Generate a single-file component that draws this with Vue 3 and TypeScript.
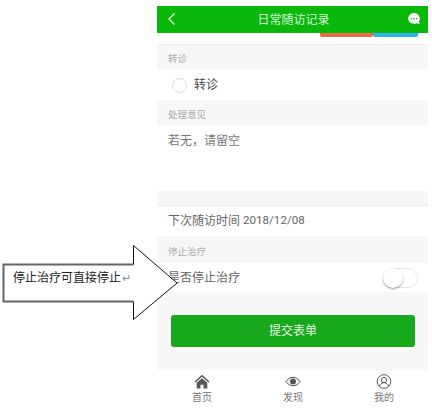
<script setup lang="ts">
const tabs = [
    { key: 'home', label: '首页' },
    { key: 'find', label: '发现' },
    { key: 'mine', label: '我的' },
]
</script>

<template>
    <div class="page">
        <div class="phone">
            <header class="nav">
                <svg class="nav-back" width="10" height="14" viewBox="0 0 10 14">
                    <path d="M7.500 1.500 2 7l5.500 5.500" fill="none" stroke="#d9f5d9" stroke-width="1.4" />
                </svg>
                <span class="nav-title">日常随访记录</span>
                <svg class="nav-msg" width="14" height="14" viewBox="0 0 14 14">
                    <path d="M7 1c3.300 0 5.800 2.400 5.800 5.600 0 1.100-.3 2.100-.8 2.900l.6 2.600-2.800-.9c-.8.4-1.800.6-2.800.6-3.300 0-5.800-2.200-5.800-5.200S3.700 1 7 1z" fill="#fff" />
                    <circle cx="4.500" cy="6.800" r=".8" fill="#1aa81a" />
                    <circle cx="7" cy="6.800" r=".8" fill="#1aa81a" />
                    <circle cx="9.500" cy="6.800" r=".8" fill="#1aa81a" />
                </svg>
            </header>
            <div class="strip">
                <span class="strip-red"></span>
                <span class="strip-blue"></span>
            </div>

            <div class="section s-first">转诊</div>
            <div class="row r-radio">
                <span class="radio"></span>
                <span class="radio-label">转诊</span>
            </div>
            <div class="section s-opinion">处理意见</div>
            <div class="opinion">若无，请留空</div>
            <div class="gap"></div>
            <div class="row r-date">
                <span class="row-text">下次随访时间</span>
                <span class="date">2018/12/08</span>
            </div>
            <div class="section s-stop">停止治疗</div>
            <div class="row r-switch">
                <span class="row-text">是否停止治疗</span>
                <span class="switch"><span class="knob"></span></span>
            </div>
            <div class="submit-wrap">
                <button class="submit">提交表单</button>
            </div>

            <nav class="tabs">
                <div v-for="tab in tabs" :key="tab.key" class="tab">
                    <svg v-if="tab.key === 'home'" width="16" height="15" viewBox="0 0 16 15">
                        <path d="M8 .8 .5 7.500l.9 1L8 2.700l6.600 5.800.9-1z" fill="#555" />
                        <path d="M2.700 8.800 8 4.200l5.300 4.600V14.500H9.500v-3.800h-3v3.800H2.700z" fill="#555" />
                    </svg>
                    <svg v-else-if="tab.key === 'find'" width="16" height="15" viewBox="0 0 16 15">
                        <path d="M1 7.500C2.800 4.700 5.200 3.300 8 3.300s5.200 1.400 7 4.200c-1.800 2.800-4.200 4.200-7 4.200S2.800 10.300 1 7.500z" fill="none" stroke="#555" stroke-width="1" />
                        <circle cx="8" cy="7.500" r="3" fill="#555" />
                    </svg>
                    <svg v-else width="16" height="15" viewBox="0 0 16 15">
                        <circle cx="8" cy="7.500" r="6.800" fill="none" stroke="#555" stroke-width="1" />
                        <circle cx="8" cy="6" r="2.600" fill="none" stroke="#555" stroke-width="1" />
                        <path d="M3.500 12.200c.6-2.200 2.300-3.500 4.500-3.500s3.900 1.300 4.500 3.500" fill="none" stroke="#555" stroke-width="1" />
                    </svg>
                    <span class="tab-label">{{ tab.label }}</span>
                </div>
            </nav>
        </div>

        <!-- callout sits over the phone -->
        <div class="callout">
            <svg class="callout-shape" width="180" height="76" viewBox="0 0 180 76">
                <path d="M133.500 19.500V.5L177 38 133.500 74.500V56.500H3.500V19.500z" fill="#fff" />
                <path d="M133.500 19.500V.5L177 38 133.500 74.500V56.500" fill="none" stroke="#111" stroke-width="1" />
                <path d="M133.500 19.500H3.500V56.500H133.500" fill="none" stroke="#666" stroke-width="2" />
            </svg>
            <span class="callout-text">停止治疗可直接停止<span class="callout-mark">↵</span></span>
        </div>
    </div>
</template>

<style scoped>
.page {
    position: relative;
    width: 432px;
    height: 418px;
    padding: 6px 0 0 157px;
    box-sizing: border-box;
    background: #fff;
    font-family: "Noto Sans CJK SC", "Noto Sans", sans-serif;
    overflow: hidden;
}
.phone {
    width: 271px;
    display: flex;
    flex-direction: column;
    background: #fff;
}
.nav {
    height: 27px;
    background: #09b80a;
    display: flex;
    align-items: center;
    justify-content: space-between;
    padding: 0 7px 0 10px;
    box-sizing: border-box;
}
.nav-back,
.nav-msg {
    margin-bottom: 2px;
}
.nav-title {
    color: #d9f5d9;
    font-size: 12px;
    margin: 0 0 3px 3px;
}
.strip {
    height: 11px;
    display: flex;
    padding-left: 163px;
    box-sizing: border-box;
}
.strip-red,
.strip-blue {
    height: 4px;
    border-radius: 0 0 2px 2px;
}
.strip-red {
    width: 53px;
    background: #ee6a45;
}
.strip-blue {
    width: 45px;
    background: #2db4ea;
}
.section {
    background: #f7f7f7;
    color: #aaa;
    font-size: 9.500px;
    padding-left: 11px;
    display: flex;
    align-items: center;
}
.s-first {
    height: 26px;
    border-top: 1px solid #efefef;
    box-sizing: border-box;
}
.s-opinion {
    height: 26px;
    box-sizing: border-box;
    padding-top: 2px;
}
.s-stop {
    height: 27px;
    box-sizing: border-box;
    padding-top: 3px;
}
.row {
    display: flex;
    align-items: center;
    padding-left: 11px;
    color: #666;
    font-size: 12px;
    background: #fff;
}
.row-text,
.date,
.radio-label {
    margin-bottom: 3px;
}
.r-radio {
    height: 30px;
    padding-left: 15px;
    color: #444;
}
.radio {
    width: 13px;
    height: 13px;
    border: 1px solid #ddd;
    border-radius: 50%;
    margin-right: 7px;
}
.opinion {
    height: 65px;
    padding: 5px 0 0 11px;
    box-sizing: border-box;
    color: #777;
    font-size: 12px;
}
.gap {
    height: 15px;
    background: #f7f7f7;
    border-bottom: 1px solid #eee;
    box-sizing: border-box;
}
.r-date {
    height: 30px;
}
.date {
    margin-left: 3px;
    font-family: Roboto, "Liberation Sans", sans-serif;
    font-size: 11.600px;
}
.r-switch {
    height: 29px;
    justify-content: space-between;
    padding-right: 10px;
}
.switch {
    position: relative;
    width: 35px;
    height: 20px;
    border: 1px solid #e4e4e4;
    border-radius: 11px;
    box-sizing: border-box;
}
.knob {
    position: absolute;
    left: -1px;
    top: -1px;
    width: 20px;
    height: 20px;
    background: #fff;
    border-radius: 50%;
    box-shadow: 0 1px 2px rgba(0, 0, 0, 0.4);
}
.submit-wrap {
    height: 78px;
    padding: 23px 13px 0 14px;
    box-sizing: border-box;
    background: #f7f8f7;
}
.submit {
    display: block;
    width: 100%;
    height: 32px;
    border: none;
    border-radius: 3px;
    background: #17a81c;
    color: #e8f6e8;
    font-family: inherit;
    font-size: 12px;
    padding: 0 0 3px;
}
.tabs {
    height: 36px;
    display: flex;
    justify-content: space-between;
    padding: 4px 34px 0 35px;
    box-sizing: border-box;
    background: #fff;
}
.tab {
    display: flex;
    flex-direction: column;
    align-items: center;
    width: 20px;
}
.tab-label {
    font-size: 10px;
    line-height: 14px;
    margin-top: 1px;
    color: #777;
    white-space: nowrap;
}
.callout {
    position: absolute;
    left: 0;
    top: 245px;
    width: 180px;
    height: 76px;
}
.callout-shape {
    display: block;
}
.callout-text {
    position: absolute;
    left: 13px;
    top: 23px;
    font-size: 12px;
    line-height: 17px;
    color: #222;
    white-space: nowrap;
}
.callout-mark {
    font-size: 11px;
    color: #888;
    margin-left: 1px;
}
</style>
